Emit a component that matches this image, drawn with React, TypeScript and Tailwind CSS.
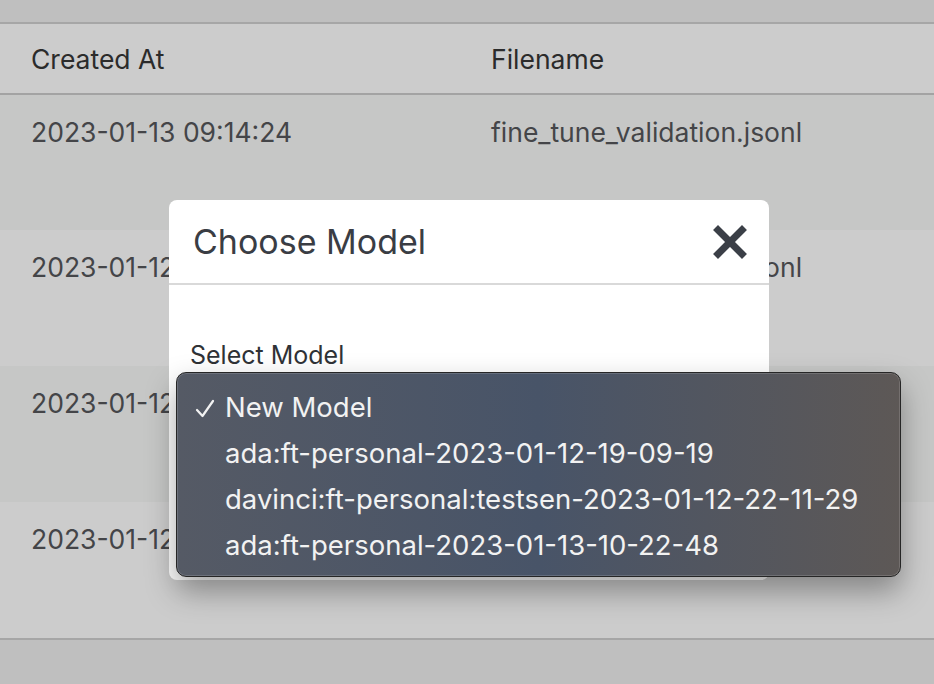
import React from 'react';

const rows = [
  { created: '2023-01-13 09:14:24', file: 'fine_tune_validation.jsonl', bg: 'bg-[#c6c7c6] h-[135px]' },
  { created: '2023-01-12 22:08:51', file: 'fine_tune_validation.jsonl', bg: 'bg-[#cccccc] h-[136px]' },
  { created: '2023-01-12 21:40:17', file: 'fine_tune_training.jsonl', bg: 'bg-[#c6c7c6] h-[136px]' },
  { created: '2023-01-12 19:02:33', file: 'fine_tune_training.jsonl', bg: 'bg-[#cccccc] h-[136px]' },
];

const models = [
  'New Model',
  'ada:ft-personal-2023-01-12-19-09-19',
  'davinci:ft-personal:testsen-2023-01-12-22-11-29',
  'ada:ft-personal-2023-01-13-10-22-48',
];

const CloseIcon = () => (
  <svg width="34" height="34" viewBox="0 0 34 34" fill="none">
    <path d="M5 5 L29 29 M29 5 L5 29" stroke="#3b3f47" strokeWidth="7" strokeLinecap="square" />
  </svg>
);

const Check = () => (
  <svg width="20" height="20" viewBox="0 0 20 20" fill="none">
    <path d="M2 11 L7.5 17 L18 2" stroke="#f2f2f2" strokeWidth="2.2" strokeLinecap="round" strokeLinejoin="round" />
  </svg>
);

export default function App() {
  return (
    <div className="relative w-[934px] h-[684px] overflow-hidden bg-[#bfbfbf] font-['Inter',sans-serif]">
      {/* dimmed table behind the modal */}
      <div className="h-[22px]" />
      <div className="border-y-2 border-[#a6a6a6]">
        <div className="flex h-[71px] items-center bg-[#cccccc] border-b-2 border-[#a3a3a3] pt-[3px] text-[26.5px] text-[#2b2b2b]">
          <div className="w-[491px] pl-[31px]">Created At</div>
          <div>Filename</div>
        </div>
        {rows.map((r, i) => (
          <div key={i} className={`flex pt-[22px] text-[26.5px] leading-[30px] text-[#444548] ${r.bg}`}>
            <div className="w-[491px] pl-[31px]">{r.created}</div>
            <div>{r.file}</div>
          </div>
        ))}
      </div>

      {/* modal */}
      <div className="absolute left-[169px] top-[200px] w-[600px] h-[380px] rounded-lg bg-white">
        <div className="flex h-[85px] items-center justify-between border-b-2 border-[#d9d9d9] pl-[24px] pr-[22px]">
          <h5 className="text-[34px] text-[#3a3d44]">Choose Model</h5>
          <CloseIcon />
        </div>
        <div className="pl-[21px] pt-[55px] text-[25px] leading-[30px] text-[#2f3236]">Select Model</div>
      </div>

      {/* native select popup */}
      <div className="absolute left-[176px] top-[372px] w-[725px] h-[205px] rounded-[10px] border border-[#262626] bg-gradient-to-r from-[#555a65] via-[#485468] to-[#5d5856] shadow-[0_14px_30px_rgba(0,0,0,0.35)] ring-1 ring-inset ring-white/15">
        <ul className="pt-[11px] text-[27.5px] leading-[46px] text-[#f2f2f2]">
          {models.map((m, i) => (
            <li key={m} className="flex items-center">
              <span className="flex w-[48px] pl-[18px] pt-[3px]">{i === 0 ? <Check /> : null}</span>
              <span>{m}</span>
            </li>
          ))}
        </ul>
      </div>
    </div>
  );
}
